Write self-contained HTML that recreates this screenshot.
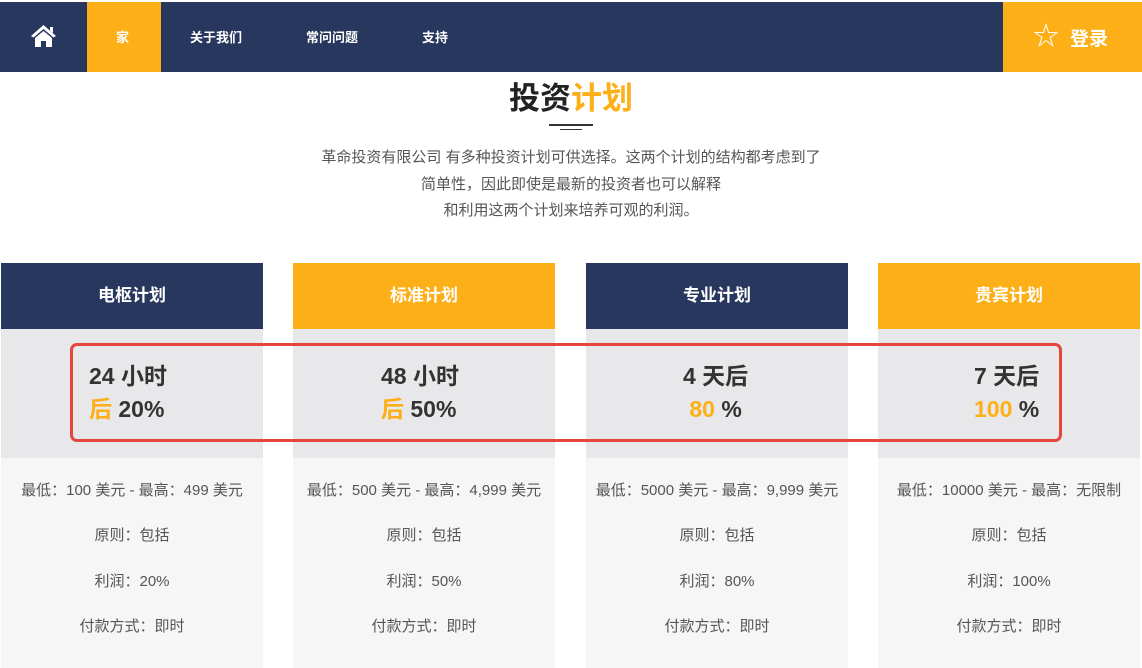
<!DOCTYPE html>
<html><head><meta charset="utf-8"><style>
*{margin:0;padding:0;box-sizing:border-box}
body{width:1142px;height:668px;overflow:hidden;background:#fff;font-family:"Liberation Sans","Noto Sans CJK SC",sans-serif;position:relative}
.nav{position:absolute;left:0;top:2px;width:1142px;height:70px;background:#27375e}
.nav .home{position:absolute;left:87px;top:0;width:74px;height:70px;background:#fdaf17}
.nav a{position:absolute;top:25px;color:#fff;font-size:13px;font-weight:bold}
.login{position:absolute;left:1003px;top:0;width:139px;height:70px;background:#fdaf17}
.title{position:absolute;top:73px;width:1142px;text-align:center;font-size:31px;font-weight:bold;color:#222}
.title span{color:#fdaf17}
.line{position:absolute;left:549px;top:124px;width:44px;height:2px;background:#333}
.line2{position:absolute;left:560px;top:129px;width:22px;height:1px;background:#333}
.desc{position:absolute;top:145px;width:1142px;text-align:center;font-size:15px;color:#555;line-height:26.5px}
.card{position:absolute;top:263px;width:262px;height:405px;background:#f6f6f6}
.card .h{height:66px;color:#fff;font-size:17px;font-weight:bold;text-align:center;line-height:66px}
.navy{background:#27375e}.org{background:#fdaf17}
.card .g{height:129px;background:#e8e8eb;font-size:23px;font-weight:bold;color:#333;padding-top:31px;line-height:33px}
.card .g span{color:#fdaf17}
.card .l{font-size:15px;color:#555;text-align:center;line-height:45.3px;padding-top:10px}
.red{position:absolute;left:70px;top:343px;width:992px;height:99px;border:3px solid #e5453f;border-radius:7px}
</style></head><body>
<div class="nav">
<svg style="position:absolute;left:30px;top:22px" width="27" height="24" viewBox="0 0 27 24"><path d="M13.5 1 L1 12 L3.5 13.5 L13.5 5 L23.5 13.5 L26 12 Z M20 3 h3 v6 l-3-2.5Z M5 14 L13.5 7 L22 14 V23 H16 V17 H11 V23 H5Z" fill="#fff"/></svg>
<div class="home"></div>
<a style="left:116px">家</a><a style="left:190px">关于我们</a><a style="left:306px">常问问题</a><a style="left:422px">支持</a>
<div class="login"><span style="position:absolute;left:30px;top:19px;color:#fff;font-size:26px;line-height:30px">☆</span><span style="position:absolute;left:67px;top:22px;color:#fff;font-size:19px;font-weight:bold">登录</span></div>
</div>
<div class="title">投资<span>计划</span></div>
<div class="line"></div><div class="line2"></div>
<div class="desc">革命投资有限公司 有多种投资计划可供选择。这两个计划的结构都考虑到了<br>简单性，因此即使是最新的投资者也可以解释<br>和利用这两个计划来培养可观的利润。</div>
<div class="card" style="left:1px"><div class="h navy">电枢计划</div><div class="g" style="padding-left:88px">24 小时<br><span>后</span> 20%</div><div class="l">最低：100 美元 - 最高：499 美元<br>原则：包括<br>利润：20%<br>付款方式：即时</div></div>
<div class="card" style="left:293px"><div class="h org">标准计划</div><div class="g" style="padding-left:88px">48 小时<br><span>后</span> 50%</div><div class="l">最低：500 美元 - 最高：4,999 美元<br>原则：包括<br>利润：50%<br>付款方式：即时</div></div>
<div class="card" style="left:586px"><div class="h navy">专业计划</div><div class="g" style="padding-left:97px">4 天后<br><span>&nbsp;80</span> %</div><div class="l">最低：5000 美元 - 最高：9,999 美元<br>原则：包括<br>利润：80%<br>付款方式：即时</div></div>
<div class="card" style="left:878px"><div class="h org">贵宾计划</div><div class="g" style="padding-left:96px">7 天后<br><span>100</span> %</div><div class="l">最低：10000 美元 - 最高：无限制<br>原则：包括<br>利润：100%<br>付款方式：即时</div></div>
<div class="red"></div>
</body></html>
